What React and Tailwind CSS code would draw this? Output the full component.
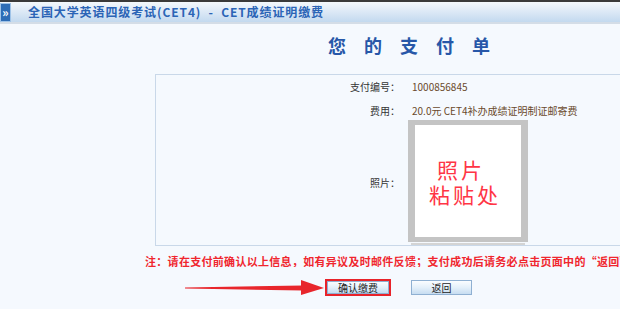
import React from 'react';

const cjk = { fontFamily: '"Noto Sans CJK SC", "Liberation Sans", sans-serif' };

const Arrow = () => (
  <svg width="140" height="16" viewBox="0 0 140 16" className="shrink-0">
    <polygon points="0,7.5 118,5.5 118,10.5 0,8.5" fill="#e8262c" />
    <polygon points="116,0 139,8 116,15" fill="#e8262c" />
  </svg>
);

const BlueButton = ({ children, className = '' }) => (
  <button
    className={`flex items-center justify-center border border-[#8fb0d2] bg-linear-to-b from-[#fbfdff] via-[#e4f0fa] to-[#c7ddf1] text-[10px] leading-none text-[#1d1d1d] ${className}`}
  >
    {children}
  </button>
);

const PaymentForm = () => (
  <div className="ml-[155px] w-[510px]">
    {/* 标题 */}
    <div className="mt-[10px] pl-[16px] text-center text-[18px] leading-[22px] font-bold tracking-[18px] text-[#2757a8]">
      您的支付单
    </div>

    {/* 信息框 */}
    <div className="mt-[18px] border border-[#c9d8e9] pt-[4px]">
      <div className="grid grid-cols-[244px_1fr] gap-x-[12px] text-[10px]">
        <div className="h-[16px] leading-[16px] text-right text-[#333]">支付编号：</div>
        <div className="h-[16px] leading-[16px] text-[#6a4a2c]">1000856845</div>

        <div className="mt-[8px] h-[16px] leading-[16px] text-right text-[#333]">费用：</div>
        <div className="mt-[8px] h-[16px] leading-[16px] text-[#6a4a2c]">20.0元 CET4补办成绩证明制证邮寄费</div>

        <div className="mt-[1px] flex items-center justify-end text-[#333]">照片：</div>
        <div className="mt-[1px]">
          <div className="-ml-[4px] w-[120px]">
            <div className="h-[122px] border-x-[7px] border-y-[5px] border-[#c4c4c4] bg-white">
              <div className="flex flex-col pt-[32px] text-[21px] leading-[25px] tracking-[3px] text-[#ff3545]">
                <span className="pl-[22px]">照片</span>
                <span className="pl-[14px]">粘贴处</span>
              </div>
            </div>
            <div className="mx-[3px] mt-[1px] h-[2px] bg-[#d4d4d4]" />
          </div>
        </div>
      </div>
    </div>

    {/* 提示 */}
    <div className="-ml-[10px] mt-[9px] w-[475px] overflow-hidden whitespace-nowrap text-[11px] leading-[12px] font-bold tracking-[0.3px] text-[#f0262e]">
      注：请在支付前确认以上信息，如有异议及时邮件反馈；支付成功后请务必点击页面中的“返回”
    </div>

    {/* 按钮 */}
    <div className="mt-[12px] flex items-center">
      <div className="ml-[30px]">
        <Arrow />
      </div>
      <div className="border-2 border-[#e8232a]">
        <BlueButton className="h-[13px] w-[62px]">确认缴费</BlueButton>
      </div>
      <BlueButton className="ml-[20px] h-[15px] w-[61px]">返回</BlueButton>
    </div>
  </div>
);

export default function App() {
  return (
    <div className="h-[309px] w-[620px] overflow-hidden bg-[#f5f9fe]" style={cjk}>
      {/* 顶部栏 */}
      <div className="h-[2px] bg-[#3a3a3a]" />
      <div className="flex h-[22px] items-center border-b-2 border-[#d4dde7] bg-linear-to-b from-[#f4f8fc] to-[#c3d9ef]">
        <div className="flex h-[19px] w-[11px] items-center justify-center border border-[#9fc3e8] bg-[#2e6db6] text-[12px] leading-none font-bold text-white">
          »
        </div>
        <div className="ml-[17px] text-[12px] leading-none font-bold tracking-[0.9px] text-[#2b64b6]">
          全国大学英语四级考试(CET4) &nbsp;-&nbsp; CET成绩证明缴费
        </div>
      </div>

      <PaymentForm />
    </div>
  );
}
